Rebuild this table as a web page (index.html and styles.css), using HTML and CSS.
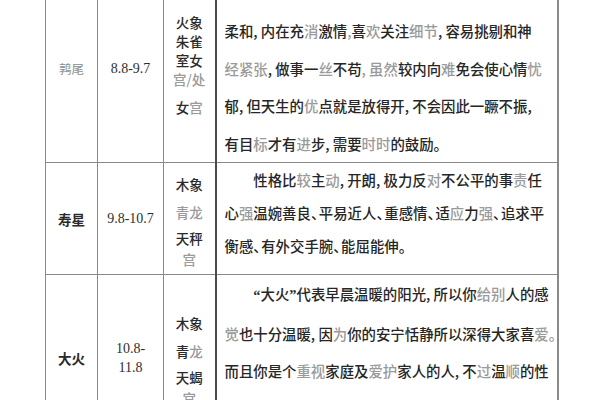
FILE: index.html
```html
<!DOCTYPE html>
<html lang="zh-CN">
<head>
<meta charset="utf-8">
<title>星次表</title>
<link rel="stylesheet" href="styles.css">
</head>
<body>
<table class="sheet">
  <colgroup>
    <col class="c-name">
    <col class="c-date">
    <col class="c-sign">
    <col class="c-text">
  </colgroup>
  <tr class="row-1">
    <td class="name light">鹑尾</td>
    <td class="date">8.8-9.7</td>
    <td class="sign s1">
      <div class="sl">火象</div>
      <div class="sl">朱雀</div>
      <div class="sl">室女</div>
      <div class="sl g">宫/处</div>
      <div class="sl gap">女<span class="g">宫</span></div>
    </td>
    <td class="text t1">
      <div class="ln">柔和, 内在充<span class="g">消</span>激情<span class="g">,</span>喜<span class="g">欢</span>关注<span class="g">细节</span>, 容易挑剔和神</div>
      <div class="ln"><span class="g">经紧张</span>, 做事一<span class="g">丝</span>不苟<span class="g">, 虽然</span>较内向<span class="g">难</span>免会使心情<span class="g">忧</span></div>
      <div class="ln">郁, 但天生的<span class="g">优</span>点就是放得开, 不会因此一蹶不振,</div>
      <div class="ln">有目<span class="g">标</span>才有<span class="g">进</span>步, 需要<span class="g">时时</span>的鼓励。</div>
    </td>
  </tr>
  <tr class="row-2">
    <td class="name">寿星</td>
    <td class="date">9.8-10.7</td>
    <td class="sign">
      <div class="sl2">木象</div>
      <div class="sl2 g">青龙</div>
      <div class="sl3">天秤</div>
      <div class="sl4 g">宫</div>
    </td>
    <td class="text t2">
      <div class="ln">　　性格比<span class="g">较</span>主<span class="g">动</span>, 开朗, 极力反<span class="g">对</span>不公平的事<span class="g">责</span>任</div>
      <div class="ln">心<span class="g">强</span>温婉善良<span class="dun">、</span>平易近人<span class="dun">、</span>重感情<span class="dun">、</span>适<span class="g">应</span>力<span class="g">强</span><span class="dun">、</span>追求平</div>
      <div class="ln">衡感<span class="dun">、</span>有外交手腕<span class="dun">、</span>能屈能伸。</div>
    </td>
  </tr>
  <tr class="row-3">
    <td class="name">大火</td>
    <td class="date">10.8-<br>11.8</td>
    <td class="sign">
      <div class="sl2">木象</div>
      <div class="sl2">青<span class="g">龙</span></div>
      <div class="sl3">天蝎</div>
      <div class="sl4 g">宫</div>
    </td>
    <td class="text t3">
      <div class="ln">　　<span class="q">“</span>大火<span class="q">”</span>代表早晨温暖的阳光, 所以你<span class="g">给别</span>人的感</div>
      <div class="ln"><span class="g">觉</span>也十分温暖, 因<span class="g">为</span>你的安宁恬静所以深得大家喜<span class="g">爱</span><span class="g">。</span></div>
      <div class="ln">而且你是个<span class="g">重视</span>家庭及<span class="g">爱护</span>家人的人, 不<span class="g">过</span>温<span class="g">顺</span>的性</div>
    </td>
  </tr>
</table>
</body>
</html>
```
FILE: styles.css
```css
html, body {
  margin: 0;
  padding: 0;
  background: #ffffff;
  overflow: hidden;
}

body {
  width: 600px;
  height: 400px;
  font-family: "Noto Sans CJK SC", "Liberation Sans", sans-serif;
  color: #262626;
}

.sheet {
  margin: -26px 0 0 45px;
  border-collapse: collapse;
  table-layout: fixed;
  width: 512px;
}

.c-name { width: 52px; }
.c-date { width: 66px; }
.c-sign { width: 52px; }
.c-text { width: 342px; }

.sheet td {
  border: 1.5px solid #8a8a8a;
  padding: 0;
  vertical-align: middle;
}

.sheet td.text {
  border-left: 2px solid #4a4a4a;
  border-right: 2px solid #8a8a8a;
  padding-left: 8px;
  vertical-align: top;
  font-size: 14.4px;
  font-weight: 500;
  white-space: nowrap;
}

.row-1 { height: 188px; }
.row-2 { height: 112px; }
.row-3 { height: 166px; }

.name {
  text-align: center;
  font-size: 13.5px;
  font-weight: 700;
  color: #2a2a2a;
}

.name.light {
  font-size: 12.5px;
  font-weight: 400;
  color: #8c8c8c;
}

.date {
  text-align: center;
  font-family: "Liberation Serif", serif;
  font-size: 14px;
  color: #2f2f2f;
  line-height: 19px;
}

.sign {
  text-align: center;
  font-size: 13.5px;
  font-weight: 500;
  color: #2a2a2a;
}

.sheet td.s1 {
  vertical-align: top;
  padding-top: 38px;
}

.sl { line-height: 19px; }
.sl.gap { margin-top: 9px; }
.sl2 { line-height: 28px; }
.sl3 { line-height: 25px; }
.sl4 { line-height: 17px; }

.g { color: #9a9a9a; }

.dun { letter-spacing: -0.45em; }

.q {
  font-family: "Liberation Serif", serif;
  font-weight: 700;
}

.sheet td.t1 { padding-top: 37px; }
.t1 .ln { line-height: 37.5px; }

.t2 .ln { line-height: 33px; }

.t3 .ln { line-height: 37.5px; }
```
